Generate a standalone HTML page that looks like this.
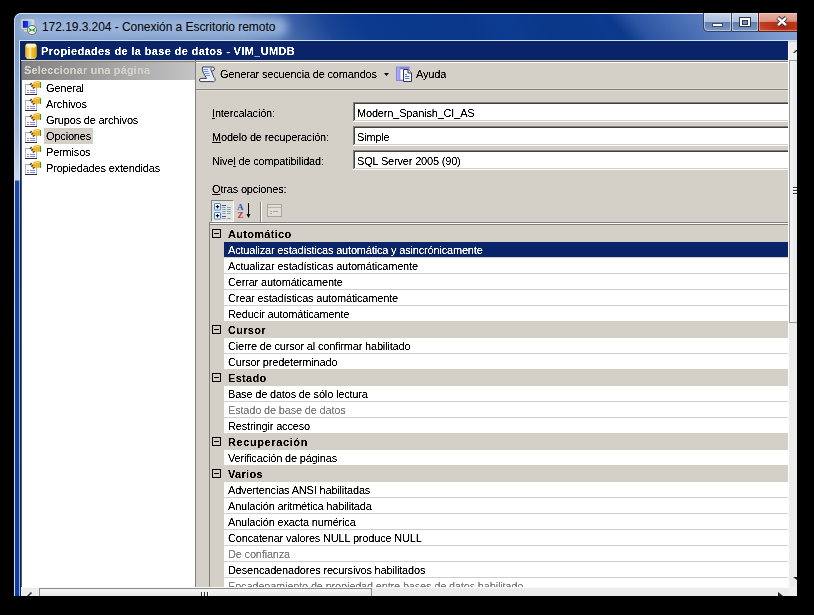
<!DOCTYPE html>
<html><head><meta charset="utf-8">
<style>
*{margin:0;padding:0;box-sizing:border-box}
html,body{width:814px;height:615px;overflow:hidden;background:#000}
body{position:relative;font-family:"Liberation Sans",sans-serif;font-size:11px;color:#000}
.a{position:absolute}
.t{position:absolute;white-space:nowrap;font-size:11px;letter-spacing:-0.18px;line-height:13px;filter:url(#crisp)}
.b{font-weight:bold}
.u{text-decoration:underline}
.tb{width:440px;height:20px;background:#fff;box-shadow:inset -1px -1px 0 #fff, inset 1px 1px 0 #808080, inset -2px -2px 0 #d4d0c8, inset 2px 2px 0 #404040}
.mb{width:9px;height:9px;border:1px solid #000;background:transparent}
.mb:after{content:"";position:absolute;left:1px;top:3px;width:5px;height:1px;background:#000}
</style></head><body>
<svg width="0" height="0" style="position:absolute"><defs>
<filter id="crisp" x="0" y="0" width="100%" height="100%"><feComponentTransfer><feFuncA type="linear" slope="2.5" intercept="-0.6"/></feComponentTransfer></filter>
<g id="pgicon">
  <rect x="1.5" y="4.5" width="11" height="10" fill="#fff" stroke="#b8b8c8"/>
  <path d="M1 4.5 H7" stroke="#a0a0f0"/>
  <path d="M1 14.5 H13" stroke="#303030"/>
  <path d="M12.5 9 V14" stroke="#b0b0ec"/>
  <path d="M3 10.5 H5 M6 10.5 H11 M3 12.5 H5 M6 12.5 H11" stroke="#8a8ae0"/>
  <path d="M6.5 3.5 L10.5 8.5" stroke="#e8c040" stroke-width="2.6"/>
  <path d="M6.5 3.5 L10.5 8.5" stroke="#383848" stroke-width="2.6" stroke-dasharray="1.1 1.3"/>
  <path d="M9.5 2 Q12.5 0.6 16 1.4 L16 7.6 Q13 8.6 10.5 7.2 Q8.8 4.5 9.5 2 Z" fill="#f2b428"/>
  <path d="M10.8 3 Q13 1.8 15 2.3" stroke="#fbe48a" stroke-width="1" fill="none"/>
  <path d="M16.5 2 V8" stroke="#28a028" stroke-width="1"/>
</g></defs></svg>


<!-- RDP window -->
<div class="a" id="win" style="left:14px;top:13px;width:783px;height:583px;overflow:hidden;border-top-left-radius:7px;background:#1040a0">
  <!-- title bar -->
  <div class="a" style="left:0;top:0;width:783px;height:28px;background:linear-gradient(60deg,#84a0cc 0px,#7494c4 200px,#1a4494 280px,#0b3a8e 310px,#0a378a 400px,#0c3c92 430px,#0a3788 470px,#0b3a8e 520px,#0a3484 560px,#0a3484 783px)"></div>
  <div class="a" style="left:560px;top:0;width:223px;height:28px;background:linear-gradient(50deg,rgba(10,52,132,0) 0%,rgba(10,52,132,0) 22%,rgba(42,84,162,1) 31%,rgba(80,116,184,1) 55%,rgba(125,155,206,1) 85%,rgba(140,168,214,1) 100%)"></div>
  <!-- glow behind title -->
  <div class="a" style="left:6px;top:4px;width:268px;height:20px;background:rgba(158,184,222,0.85);filter:blur(4px);border-radius:10px"></div>
  <div class="a" style="left:5px;top:27px;width:778px;height:1px;background:#d4e2f6"></div>
  <!-- left frame -->
  <div class="a" style="left:0;top:0;width:783px;height:600px;border-top:1px solid #dce8f6;border-left:1px solid #d0def2;border-top-left-radius:7px"></div>
  <div class="a" style="left:1px;top:27px;width:4px;height:556px;background:linear-gradient(#7c9cc8 0,#9ab4d8 91px,#c8d8ec 140px,#1a4aa2 141px,#1444a0 201px,#0f3f9e 556px)"></div>
  <div class="a" style="left:5px;top:28px;width:1px;height:555px;background:linear-gradient(#d8e4f6 0,#e0eaf8 139px,#9ab4de 140px,#9ab4de 555px)"></div>

  <!-- title icon -->
  <svg class="a" style="left:6px;top:5px" width="18" height="18" viewBox="0 0 18 18">
    <defs><linearGradient id="scr" x1="0" x2="1"><stop offset="0" stop-color="#0818c8"/><stop offset="0.5" stop-color="#1040f0"/><stop offset="0.55" stop-color="#80a8ff"/><stop offset="1" stop-color="#c0d8ff"/></linearGradient></defs>
    <rect x="1.5" y="1.5" width="12.5" height="9.5" rx="0.5" fill="#e6e0cc" stroke="#d0c8b0"/>
    <rect x="2.8" y="2.8" width="10" height="7" fill="url(#scr)"/>
    <rect x="4" y="12" width="5" height="1.5" fill="#e4dcc4"/>
    <circle cx="12" cy="12" r="4.5" fill="#f4f4f4" stroke="#707070" stroke-width="1.1"/>
    <path d="M9.2 10.6 L11.2 12 L9.2 13.6 M14.8 10.6 L12.8 12 L14.8 13.6" fill="none" stroke="#1e9a1e" stroke-width="1.3"/>
  </svg>
  <div class="t" style="filter:none;left:28px;top:7px;font-size:12px;letter-spacing:-0.05px;line-height:14px;color:#000;">172.19.3.204 - Conexión a Escritorio remoto</div>

  <!-- caption buttons -->
  <div class="a" style="left:689px;top:0;width:28px;height:19px;border:1px solid #34425e;border-top:none;border-right:none;border-bottom-left-radius:5px;background:linear-gradient(#c6d4ea 0,#aebfdc 48%,#5f7eb0 52%,#7896c6 100%);box-shadow:inset 0 0 0 1px rgba(255,255,255,0.45)"></div>
  <div class="a" style="left:698px;top:10px;width:11px;height:4px;background:#fff;border:1px solid #404a60"></div>
  <div class="a" style="left:717px;top:0;width:27px;height:19px;border-left:1px solid #34425e;border-bottom:1px solid #34425e;background:linear-gradient(#c6d4ea 0,#aebfdc 48%,#5f7eb0 52%,#7896c6 100%);box-shadow:inset 0 0 0 1px rgba(255,255,255,0.45)"></div>
  <div class="a" style="left:725px;top:4px;width:12px;height:10px;background:#fff;border:1px solid #303848"></div>
  <div class="a" style="left:728px;top:7px;width:6px;height:5px;background:#7088b8;border:1px solid #303848"></div>
  <div class="a" style="left:744px;top:0;width:50px;height:19px;border-left:1px solid #5a2020;border-bottom:1px solid #5a2020;background:radial-gradient(ellipse 55% 45% at 50% 80%,rgba(176,32,8,0.9) 0%,rgba(176,32,8,0) 100%),linear-gradient(#eab0a2 0,#dc9484 48%,#bc3a1c 52%,#cc5a3c 100%);box-shadow:inset 0 0 0 1px rgba(255,255,255,0.35)"></div>
  <svg class="a" style="left:762px;top:3px" width="12" height="11" viewBox="0 0 12 11">
    <path d="M1.8 1.5 L10.2 9.5 M10.2 1.5 L1.8 9.5" stroke="#3a3030" stroke-width="4.2"/>
    <path d="M2 1.8 L10 9.2 M10 1.8 L2 9.2" stroke="#fff" stroke-width="2.4"/>
  </svg>
</div>

<!-- remote area -->
<div class="a" id="remote" style="left:20px;top:41px;width:777px;height:555px;overflow:hidden;background:#d4d0c8">
  <!-- dialog caption -->
  <div class="a" style="left:0;top:0;width:768px;height:19px;background:#0a246a"></div>
  <div class="a" style="left:0;top:0;width:1px;height:555px;background:#0a246a"></div>
  <svg class="a" style="left:5px;top:2px" width="12" height="16" viewBox="0 0 12 16">
    <defs><linearGradient id="cy" x1="0" x2="1"><stop offset="0" stop-color="#e8b420"/><stop offset="0.25" stop-color="#f4c840"/><stop offset="0.42" stop-color="#f8f0b8"/><stop offset="0.58" stop-color="#f0c030"/><stop offset="1" stop-color="#e0a000"/></linearGradient></defs>
    <path d="M0.2 2.5 L1.8 0.5 H10.2 L11.8 2.5 V13.5 L10.2 15.8 H1.8 L0.2 13.5 Z" fill="url(#cy)"/>
    <path d="M0.8 2.6 L2 1 H10 L11.2 2.6 L10 4.6 H2 Z" fill="#fff6c4"/>
    <path d="M2 15.2 H10" stroke="#f8e8a0" stroke-width="0.8"/>
  </svg>
  <div class="t b" style="left:21px;top:4px;color:#fff;letter-spacing:0.36px">Propiedades de la base de datos - VIM_UMDB</div>

  <!-- left panel -->
  <div class="a" style="left:1px;top:19px;width:174px;height:1px;background:#d4d0c8"></div>
  <div class="a" style="left:1px;top:20px;width:767px;height:1px;background:#808080"></div>
  <div class="a" style="left:1px;top:21px;width:174px;height:18px;background:linear-gradient(90deg,#808080,#c4c4c4)"></div>
  <div class="t b" style="left:4px;top:23px;color:#d4d0c8;letter-spacing:0.15px">Seleccionar una página</div>
  <div class="a" style="left:1px;top:39px;width:174px;height:520px;background:#fff"></div>
  <div class="a" style="left:1px;top:20px;width:1px;height:535px;background:#5a5a60"></div>
  <div class="a" style="left:175px;top:19px;width:1px;height:540px;background:#808080"></div>

    <svg class="a pi" style="left:4px;top:39px" width="18" height="16" viewBox="0 0 18 16"><use href="#pgicon"/></svg>
  <div class="t" style="left:26px;top:41px">General</div>
  <svg class="a pi" style="left:4px;top:55px" width="18" height="16" viewBox="0 0 18 16"><use href="#pgicon"/></svg>
  <div class="t" style="left:26px;top:57px">Archivos</div>
  <svg class="a pi" style="left:4px;top:71px" width="18" height="16" viewBox="0 0 18 16"><use href="#pgicon"/></svg>
  <div class="t" style="left:26px;top:73px">Grupos de archivos</div>
  <div class="a" style="left:24px;top:87px;width:49px;height:16px;background:#d4d0c8"></div>
  <svg class="a pi" style="left:4px;top:87px" width="18" height="16" viewBox="0 0 18 16"><use href="#pgicon"/></svg>
  <div class="t" style="left:26px;top:89px">Opciones</div>
  <svg class="a pi" style="left:4px;top:103px" width="18" height="16" viewBox="0 0 18 16"><use href="#pgicon"/></svg>
  <div class="t" style="left:26px;top:105px">Permisos</div>
  <svg class="a pi" style="left:4px;top:119px" width="18" height="16" viewBox="0 0 18 16"><use href="#pgicon"/></svg>
  <div class="t" style="left:26px;top:121px">Propiedades extendidas</div>
  <!-- toolbar (remote coords: page - (20,41)) -->
  <div class="a" style="left:176px;top:21px;width:592px;height:1px;background:#fff"></div>
  <div class="a" style="left:176px;top:48px;width:592px;height:1px;background:#808080"></div>
  <div class="a" style="left:176px;top:49px;width:592px;height:1px;background:#dedad4"></div>
  <div class="a" style="left:176px;top:47px;width:592px;height:1px;background:#dedad4"></div>
  <svg class="a" style="left:179px;top:25px" width="17" height="17" viewBox="0 0 17 17">
    <path d="M3.5 1 H13.6 A1.9 1.9 0 0 1 13.6 4.8 H12.3 L15 11.6 A2.2 2.2 0 0 1 13 15.6 H2 A1.6 1.6 0 0 1 2 12.4 H7.5 L4 6 Q3 3 3.5 1 Z" fill="#e8eefc" stroke="#33425e" stroke-width="1"/>
    <path d="M2.2 14 H10.5" stroke="#fff" stroke-width="1.2"/>
    <path d="M12 4.6 Q11 2.5 13 1.5" fill="none" stroke="#33425e" stroke-width="0.9"/>
    <path d="M4.5 3.5 H9 M4.8 5.5 H9.5 M5.8 7.5 H10.5 M7 9.5 H11" stroke="#6a96e8"/>
  </svg>
  <div class="t" style="left:200px;top:27px">Generar secuencia de comandos</div>
  <svg class="a" style="left:364px;top:32px" width="5" height="3" viewBox="0 0 5 3"><path d="M0 0 H5 L2.5 3 Z" fill="#000"/></svg>
  <svg class="a" style="left:375px;top:24px" width="18" height="18" viewBox="0 0 18 18">
    <rect x="1" y="1.5" width="13.5" height="14.5" fill="#8484e4"/>
    <rect x="2" y="2.5" width="3" height="12.5" fill="#a8a8f4"/>
    <path d="M5 4 H10 V15 H5 Z" fill="#fff" stroke="#7070c0" stroke-width="0.6"/>
    <path d="M8.5 4.5 H13 L16.5 8 V16.5 H8.5 Z" fill="#f4f6fc" stroke="#2a3a52"/>
    <path d="M13 4.5 V8 H16.5" fill="#dde4f4" stroke="#2a3a52"/>
    <path d="M10 9.5 H12 M10 11.5 H14.5 M10 13.5 H14.5" stroke="#5a7ac8"/>
  </svg>
  <div class="t" style="left:396px;top:27px">Ayuda</div>

  <!-- form labels -->
  <div class="t" style="left:192px;top:66px"><span class="u">I</span>ntercalación:</div>
  <div class="t" style="left:192px;top:90px"><span class="u">M</span>odelo de recuperación:</div>
  <div class="t" style="left:192px;top:114px">Nive<span class="u">l</span> de compatibilidad:</div>
  <div class="t" style="left:192px;top:142px"><span class="u">O</span>tras opciones:</div>
  <!-- textboxes -->
  <div class="a tb" style="left:333px;top:61px"></div>
  <div class="a tb" style="left:333px;top:85px"></div>
  <div class="a tb" style="left:333px;top:109px"></div>
  <div class="t" style="left:337px;top:66px">Modern_Spanish_CI_AS</div>
  <div class="t" style="left:337px;top:90px">Simple</div>
  <div class="t" style="left:337px;top:114px">SQL Server 2005 (90)</div>

  <!-- property grid toolbar -->
  <div class="a" style="left:191px;top:159px;width:23px;height:22px;border-top:1px solid #808080;border-left:1px solid #808080;border-right:1px solid #fff;border-bottom:1px solid #fff;background:#e4e2dc"></div>
  <svg class="a" style="left:193px;top:161px" width="20" height="19" viewBox="0 0 20 19">
    <rect x="1.5" y="1.5" width="6" height="6.5" rx="1" fill="#fff" stroke="#4a8ee0" stroke-width="1.1"/>
    <path d="M4.5 3 V6.5 M2.8 4.7 H6.2" stroke="#000" stroke-width="1.2"/>
    <rect x="1.5" y="10.5" width="6" height="6.5" rx="1" fill="#fff" stroke="#4a8ee0" stroke-width="1.1"/>
    <path d="M4.5 12 V15.5 M2.8 13.7 H6.2" stroke="#000" stroke-width="1.2"/>
    <path d="M9 3.5 H13 M9 14.5 H13" stroke="#505050" stroke-width="1"/>
    <path d="M9 5.5 H11 M9 7.5 H11 M9 9.5 H11 M9 11.5 H11 M9 16.5 H11 M14 5.5 H16 M14 7.5 H16 M14 9.5 H16 M14 11.5 H16 M14 16.5 H16" stroke="#9a9ae0" stroke-width="1"/>
    <path d="M11 5.5 H12.5 M11 7.5 H12.5 M11 9.5 H12.5 M11 11.5 H12.5 M11 16.5 H12.5 M16 5.5 H17.5 M16 7.5 H17.5 M16 9.5 H17.5 M16 11.5 H17.5 M16 16.5 H17.5" stroke="#50a8a0" stroke-width="1"/>
  </svg>
  <svg class="a" style="left:217px;top:161px" width="18" height="18" viewBox="0 0 18 18">
    <text x="0" y="8" font-family="Liberation Serif" font-weight="bold" font-size="9" fill="#2a50d0">A</text>
    <text x="0.5" y="16" font-family="Liberation Serif" font-weight="bold" font-size="9" fill="#c03040">Z</text>
    <path d="M11.5 1 V15" stroke="#000" stroke-width="1"/>
    <path d="M9.5 12 L11.5 16 L13.5 12 Z" fill="#000"/>
  </svg>
  <div class="a" style="left:240px;top:161px;width:1px;height:20px;background:#808080"></div>
  <div class="a" style="left:241px;top:161px;width:1px;height:20px;background:#fff"></div>
  <svg class="a" style="left:246px;top:162px" width="17" height="16" viewBox="0 0 17 16">
    <rect x="1.5" y="1.5" width="14" height="12" fill="#e0ddd6" stroke="#a8a49c"/>
    <path d="M2 4.5 H15" stroke="#b8b4ac"/>
    <path d="M4 8.5 H6 M7 8.5 H12 M4 10.5 H6" stroke="#a8a49c"/>
  </svg>

  <!-- property grid -->
  <div class="a" style="left:189px;top:181px;width:579px;height:1px;background:#808080"></div>
  <div class="a" style="left:190px;top:182px;width:578px;height:1px;background:#fff"></div>
  <div class="a" style="left:189px;top:183px;width:579px;height:1px;background:#808080"></div>
  <div class="a" style="left:189px;top:181px;width:1px;height:380px;background:#808080"></div>
  <div class="a" id="grid" style="left:190px;top:184px;width:578px;height:362px;overflow:hidden;background:#d4d0c8">
    <div class="a mb" style="left:2px;top:4px"></div>
    <div class="t b" style="left:18px;top:3px;letter-spacing:0.3px">Automático</div>
    <div class="a" style="left:14px;top:17px;width:564px;height:15px;background:#0a246a"></div>
    <div class="t" style="left:18px;top:19px;color:#fff">Actualizar estadísticas automática y asincrónicamente</div>
    <div class="a" style="left:14px;top:33px;width:564px;height:15px;background:#fff"></div>
    <div class="t" style="left:18px;top:35px;color:#000">Actualizar estadísticas automáticamente</div>
    <div class="a" style="left:14px;top:49px;width:564px;height:15px;background:#fff"></div>
    <div class="t" style="left:18px;top:51px;color:#000">Cerrar automáticamente</div>
    <div class="a" style="left:14px;top:65px;width:564px;height:15px;background:#fff"></div>
    <div class="t" style="left:18px;top:67px;color:#000">Crear estadísticas automáticamente</div>
    <div class="a" style="left:14px;top:81px;width:564px;height:15px;background:#fff"></div>
    <div class="t" style="left:18px;top:83px;color:#000">Reducir automáticamente</div>
    <div class="a mb" style="left:2px;top:100px"></div>
    <div class="t b" style="left:18px;top:99px;letter-spacing:0.3px">Cursor</div>
    <div class="a" style="left:14px;top:113px;width:564px;height:15px;background:#fff"></div>
    <div class="t" style="left:18px;top:115px;color:#000">Cierre de cursor al confirmar habilitado</div>
    <div class="a" style="left:14px;top:129px;width:564px;height:15px;background:#fff"></div>
    <div class="t" style="left:18px;top:131px;color:#000">Cursor predeterminado</div>
    <div class="a mb" style="left:2px;top:148px"></div>
    <div class="t b" style="left:18px;top:147px;letter-spacing:0.3px">Estado</div>
    <div class="a" style="left:14px;top:161px;width:564px;height:15px;background:#fff"></div>
    <div class="t" style="left:18px;top:163px;color:#000">Base de datos de sólo lectura</div>
    <div class="a" style="left:14px;top:177px;width:564px;height:15px;background:#fff"></div>
    <div class="t" style="left:18px;top:179px;color:#808080">Estado de base de datos</div>
    <div class="a" style="left:14px;top:193px;width:564px;height:15px;background:#fff"></div>
    <div class="t" style="left:18px;top:195px;color:#000">Restringir acceso</div>
    <div class="a mb" style="left:2px;top:212px"></div>
    <div class="t b" style="left:18px;top:211px;letter-spacing:0.6px">Recuperación</div>
    <div class="a" style="left:14px;top:225px;width:564px;height:15px;background:#fff"></div>
    <div class="t" style="left:18px;top:227px;color:#000">Verificación de páginas</div>
    <div class="a mb" style="left:2px;top:244px"></div>
    <div class="t b" style="left:18px;top:243px;letter-spacing:0.3px">Varios</div>
    <div class="a" style="left:14px;top:257px;width:564px;height:15px;background:#fff"></div>
    <div class="t" style="left:18px;top:259px;color:#000">Advertencias ANSI habilitadas</div>
    <div class="a" style="left:14px;top:273px;width:564px;height:15px;background:#fff"></div>
    <div class="t" style="left:18px;top:275px;color:#000">Anulación aritmética habilitada</div>
    <div class="a" style="left:14px;top:289px;width:564px;height:15px;background:#fff"></div>
    <div class="t" style="left:18px;top:291px;color:#000">Anulación exacta numérica</div>
    <div class="a" style="left:14px;top:305px;width:564px;height:15px;background:#fff"></div>
    <div class="t" style="left:18px;top:307px;color:#000">Concatenar valores NULL produce NULL</div>
    <div class="a" style="left:14px;top:321px;width:564px;height:15px;background:#fff"></div>
    <div class="t" style="left:18px;top:323px;color:#808080">De confianza</div>
    <div class="a" style="left:14px;top:337px;width:564px;height:15px;background:#fff"></div>
    <div class="t" style="left:18px;top:339px;color:#000">Desencadenadores recursivos habilitados</div>
    <div class="a" style="left:14px;top:353px;width:564px;height:15px;background:#fff"></div>
    <div class="t" style="left:18px;top:355px;color:#808080">Encadenamiento de propiedad entre bases de datos habilitado</div>
  </div>

  <!-- RDP scrollbars (page coords minus 20,41) -->
  <div class="a" style="left:768px;top:1px;width:9px;height:545px;background:#ececec;border-left:1px solid #fff"></div>
  <svg class="a" style="left:773px;top:9px" width="4" height="3" viewBox="0 0 4 3"><path d="M0 3 L3 0 L4 0 L4 1 L1.5 3 Z" fill="#222"/></svg>
  <div class="a" style="left:769px;top:19px;width:8px;height:263px;border-left:1px solid #9a9a9a;border-top:1px solid #9a9a9a;border-bottom:1px solid #9a9a9a;background:linear-gradient(90deg,#f4f4f4,#e6e6ea)"></div>
  <div class="a" style="left:773px;top:146px;width:4px;height:1px;background:#333;box-shadow:0 1px 0 #fff"></div>
  <div class="a" style="left:773px;top:149px;width:4px;height:1px;background:#333;box-shadow:0 1px 0 #fff"></div>
  <div class="a" style="left:773px;top:152px;width:4px;height:1px;background:#333;box-shadow:0 1px 0 #fff"></div>
  <svg class="a" style="left:773px;top:536px" width="4" height="3" viewBox="0 0 4 3"><path d="M0 0 L4 0 L4 3 Z" fill="#222"/></svg>
  <div class="a" style="left:768px;top:546px;width:9px;height:9px;background:#f0f0f0"></div>
  <div class="a" style="left:1px;top:546px;width:767px;height:9px;background:#ececec;border-top:1px solid #fafafa"></div>
  <svg class="a" style="left:7px;top:550px" width="5" height="5" viewBox="0 0 5 5"><path d="M0 5 L4 1 L5 2 L2 5 Z" fill="#222"/></svg>
  <div class="a" style="left:19px;top:547px;width:333px;height:8px;border:1px solid #8a8a8a;border-bottom:none;background:linear-gradient(#f6f6f6,#e8e8e8)"></div>
  <div class="a" style="left:181px;top:551px;width:1px;height:4px;background:#333;box-shadow:1px 0 0 #fff"></div>
  <div class="a" style="left:184px;top:551px;width:1px;height:4px;background:#333;box-shadow:1px 0 0 #fff"></div>
  <div class="a" style="left:187px;top:551px;width:1px;height:4px;background:#333;box-shadow:1px 0 0 #fff"></div>
  <svg class="a" style="left:758px;top:551px" width="5" height="4" viewBox="0 0 5 4"><path d="M0 0 L5 4 L0 4 Z" fill="#222"/></svg>
</div>

</body></html>
